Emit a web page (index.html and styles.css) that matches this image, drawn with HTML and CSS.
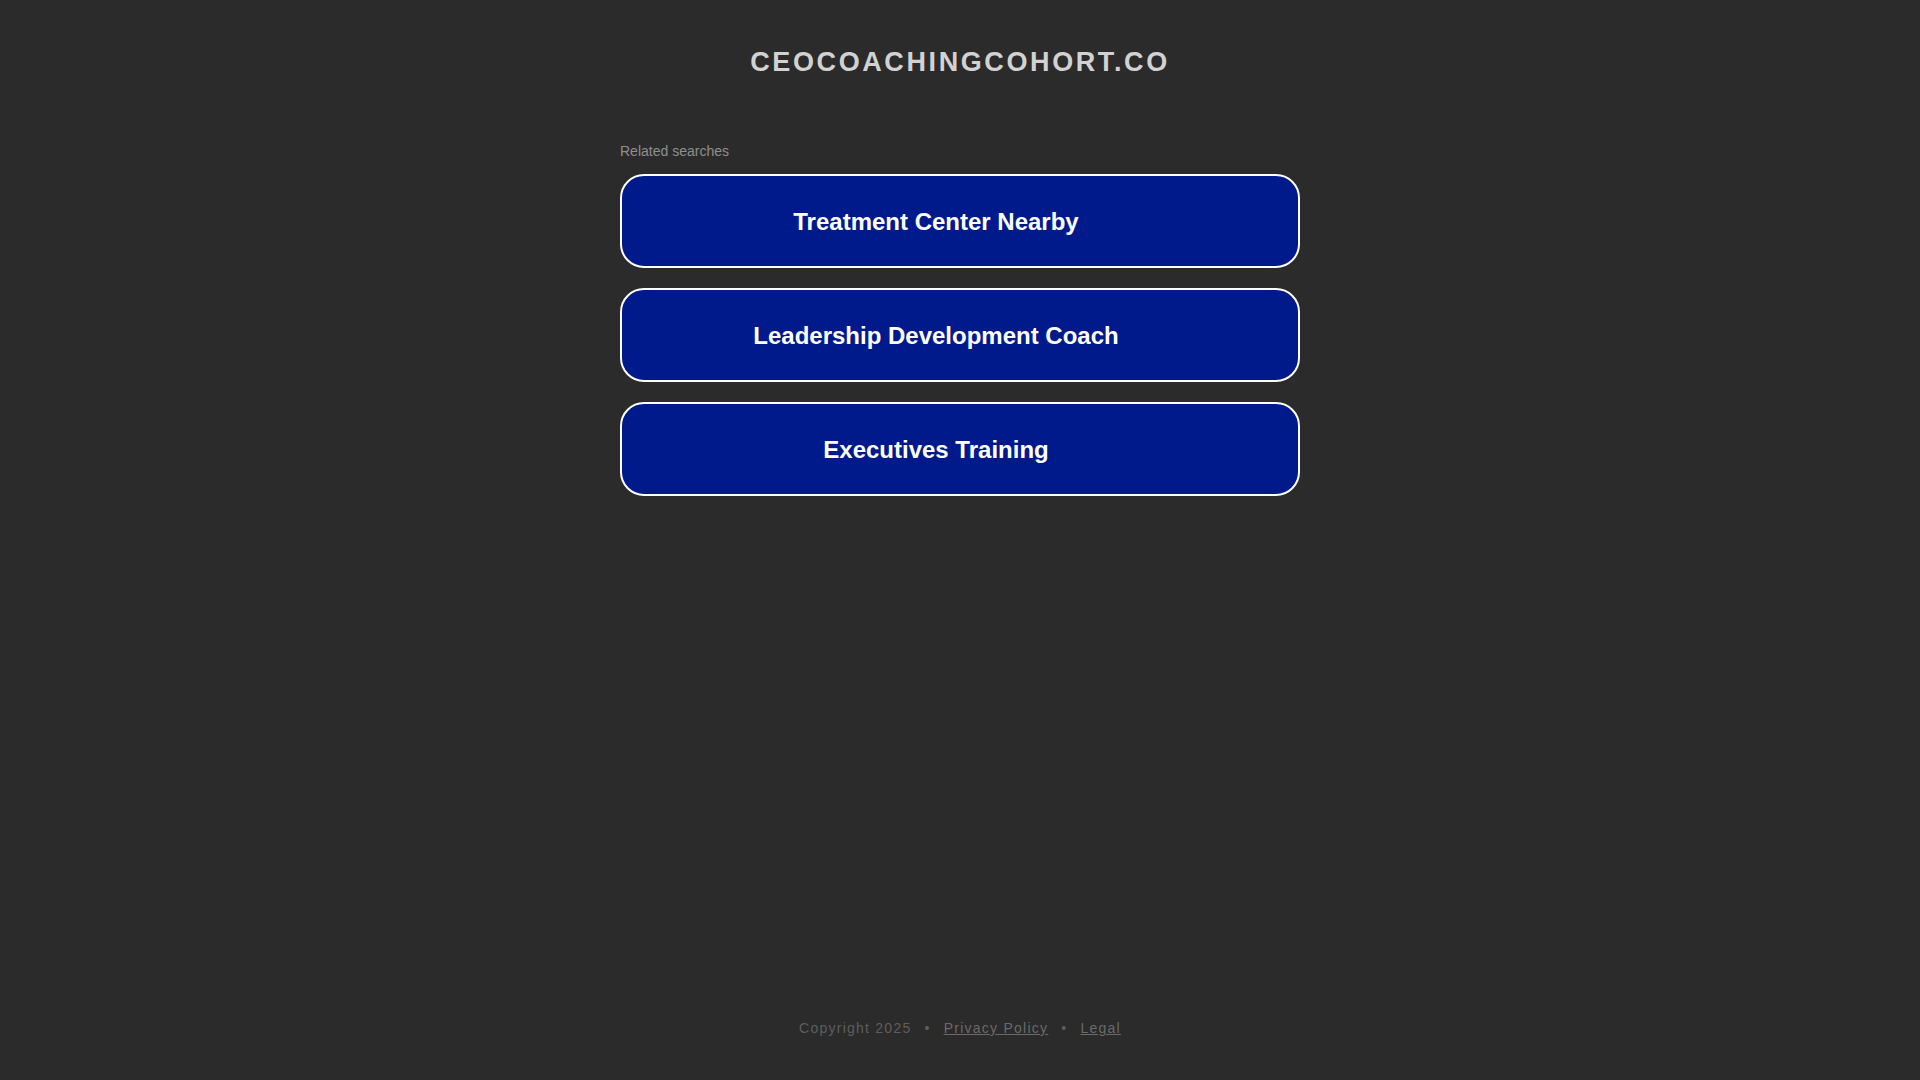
FILE: index.html
```html
<!DOCTYPE html>
<html lang="en">
<head>
<meta charset="utf-8">
<title>ceocoachingcohort.co</title>
<link rel="stylesheet" href="styles.css">
</head>
<body>
<div class="page">
  <header class="header">
    <h1 class="domain">CEOCOACHINGCOHORT.CO</h1>
  </header>
  <main class="content">
    <div class="related-title">Related searches</div>
    <div class="links">
      <a class="search-btn" href="#">Treatment Center Nearby</a>
      <a class="search-btn" href="#">Leadership Development Coach</a>
      <a class="search-btn" href="#">Executives Training</a>
    </div>
  </main>
  <footer class="footer">
    <span class="copy">Copyright 2025</span><span class="sep">•</span><a class="flink" href="#">Privacy Policy</a><span class="sep">•</span><a class="flink" href="#">Legal</a>
  </footer>
</div>
</body>
</html>
```
FILE: styles.css
```css
html, body {
  margin: 0;
  padding: 0;
  background: #2b2b2b;
}
body {
  font-family: "Liberation Sans", Arial, sans-serif;
}
.page {
  min-height: 100vh;
  display: flex;
  flex-direction: column;
  align-items: center;
}
.header {
  padding-top: 46px;
}
.domain {
  margin: 0;
  font-size: 27px;
  line-height: 32px;
  font-weight: bold;
  letter-spacing: 2.6px;
  color: #d2d2d2;
  text-align: center;
}
.content {
  width: 680px;
  margin-top: 65px;
}
.related-title {
  font-size: 14px;
  line-height: 16px;
  color: #8f8f8f;
}
.links {
  margin-top: 15px;
  display: flex;
  flex-direction: column;
  gap: 20px;
}
.search-btn {
  box-sizing: border-box;
  height: 94px;
  display: flex;
  align-items: center;
  justify-content: center;
  padding: 2px 48px 0 0;
  background: #011a8b;
  border: 2px solid #ffffff;
  border-radius: 24px;
  color: #ffffff;
  font-size: 24px;
  font-weight: bold;
  text-decoration: none;
}
.footer {
  margin-top: auto;
  padding-bottom: 43px;
  font-size: 14px;
  line-height: 18px;
  letter-spacing: 1.25px;
  color: #5e5e5e;
}
.sep {
  margin: 0 13px;
}
.flink {
  color: #6a6a6a;
  text-decoration: underline;
}
```
